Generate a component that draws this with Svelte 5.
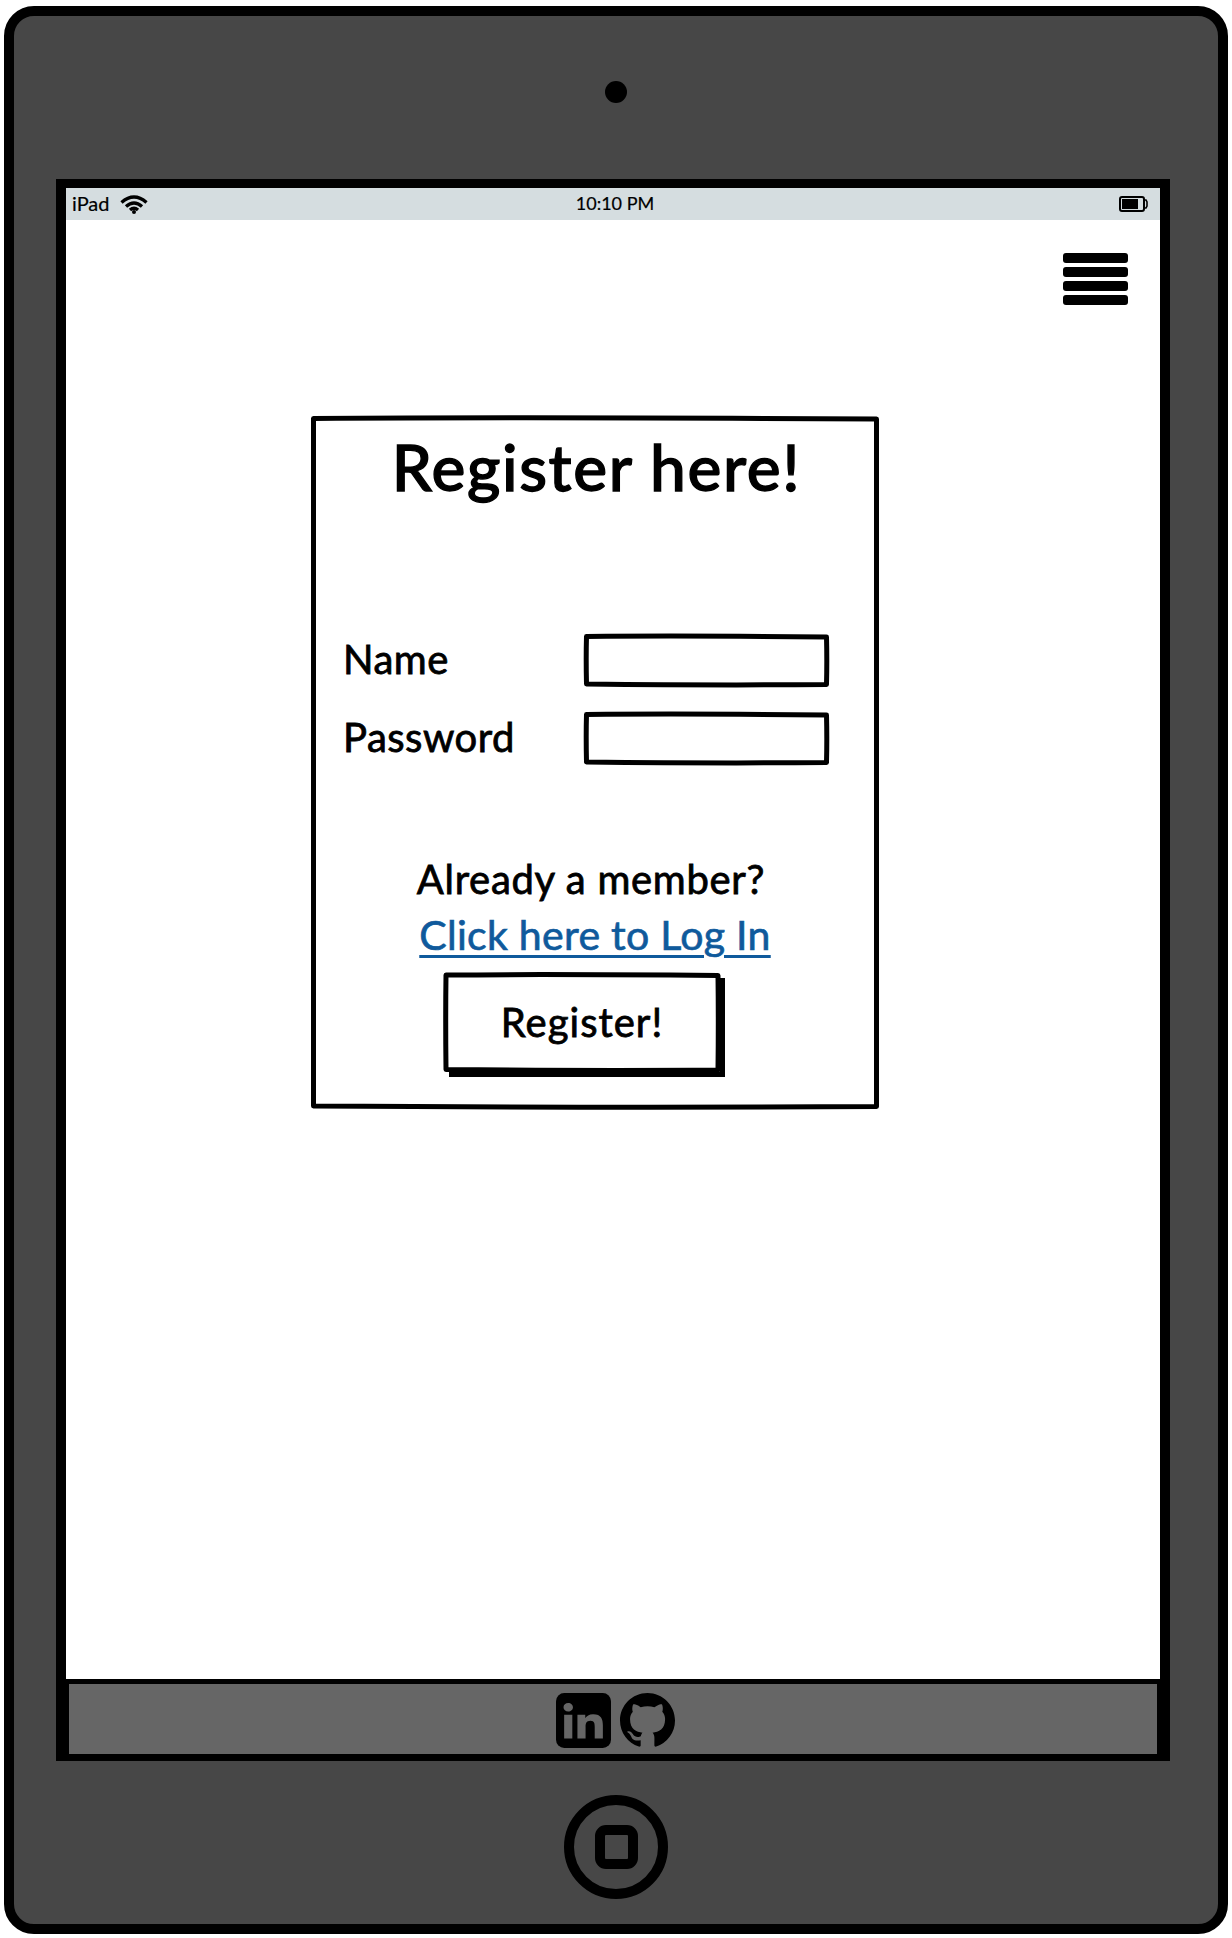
<script lang="ts">
	const github =
		'M8 0C3.58 0 0 3.58 0 8c0 3.54 2.29 6.53 5.47 7.59.4.07.55-.17.55-.38 0-.19-.01-.82-.01-1.49-2.01.37-2.53-.49-2.69-.94-.09-.23-.48-.94-.82-1.13-.28-.15-.68-.52-.01-.53.63-.01 1.08.58 1.23.82.72 1.21 1.87.87 2.33.66.07-.52.28-.87.51-1.07-1.78-.2-3.64-.89-3.64-3.95 0-.87.31-1.59.82-2.15-.08-.2-.36-1.02.08-2.12 0 0 .67-.21 2.2.82.64-.18 1.32-.27 2-.27.68 0 1.36.09 2 .27 1.53-1.04 2.2-.82 2.2-.82.44 1.1.16 1.92.08 2.12.51.56.82 1.27.82 2.15 0 3.07-1.87 3.75-3.65 3.95.29.25.54.73.54 1.48 0 1.07-.01 1.93-.01 2.2 0 .21.15.46.55.38A8.013 8.013 0 0016 8c0-4.42-3.58-8-8-8z';
	const linkedinLetters =
		'M20.447 20.452h-3.554v-5.569c0-1.328-.027-3.037-1.852-3.037-1.853 0-2.136 1.445-2.136 2.939v5.667H9.351V9h3.414v1.561h.046c.477-.9 1.637-1.85 3.37-1.85 3.601 0 4.267 2.37 4.267 5.455v6.286zM5.337 7.433c-1.144 0-2.063-.926-2.063-2.065 0-1.138.92-2.063 2.063-2.063 1.14 0 2.064.925 2.064 2.063 0 1.139-.925 2.065-2.064 2.065zm1.782 13.019H3.555V9h3.564v11.452z';
	let fields = ['Name', 'Password'];

	// hand-drawn looking outline, edges bow a little
	function sketch(w: number, h: number, i: number, bow = 1.5) {
		return [
			`M${i} ${i}`,
			`Q${w * 0.4} ${i - bow} ${w - i} ${i + 0.5}`,
			`Q${w - i + bow * 0.6} ${h * 0.5} ${w - i} ${h - i}`,
			`Q${w * 0.55} ${h - i + bow} ${i} ${h - i - 0.5}`,
			`Q${i - bow * 0.6} ${h * 0.45} ${i} ${i}Z`
		].join(' ');
	}
</script>

<div class="device">
	<div class="camera-row"><span class="camera"></span></div>
	<div class="frame">
		<div class="status">
			<div class="status-left">
				<span>iPad</span>
				<svg class="wifi" viewBox="0 0 28 19" width="28" height="19">
					<path d="M1.5 7.5 Q14 -3.5 26.5 7.5" />
					<path d="M6 11.5 Q14 4.5 22 11.5" />
					<path d="M10 15 Q14 11.5 18 15" />
					<circle cx="14" cy="17" r="2" />
				</svg>
			</div>
			<span class="time">10:10 PM</span>
			<svg class="battery" viewBox="0 0 29 16" width="29" height="16">
				<rect x="1" y="1" width="24" height="14" rx="2" fill="none" stroke="#000" stroke-width="2" />
				<rect x="3" y="3" width="16" height="10" fill="#000" />
				<path d="M25 4h2l1 2v4l-1 2h-2" fill="none" stroke="#000" stroke-width="1.6" />
			</svg>
		</div>
		<div class="screen">
			<div class="menu-row">
				<div class="menu">
					<span></span><span></span><span></span><span></span>
				</div>
			</div>
			<div class="card">
				<svg class="sketch" viewBox="0 0 568 693"><path d={sketch(568, 693, 2.5)} stroke-width="5" /></svg>
				<h1>Register here!</h1>
				<div class="fields">
					{#each fields as field}
						<div class="field">
							<span class="label">{field}</span>
							<span class="input">
								<svg class="sketch" viewBox="0 0 245 53"><path d={sketch(245, 53, 2.5, 1)} stroke-width="5" /></svg>
							</span>
						</div>
					{/each}
				</div>
				<p class="member">Already a member?</p>
				<a class="login" href="#login">Click here to Log In</a>
				<div class="button-row">
					<button type="button">
						<svg class="sketch" viewBox="0 0 276 99"><path d={sketch(276, 99, 2, 1)} stroke-width="5" /></svg>
						Register!
					</button>
				</div>
			</div>
		</div>
		<div class="footer">
			<svg viewBox="0 0 24 24" width="55" height="55">
				<rect width="24" height="24" rx="3.6" fill="#000" />
				<path d={linkedinLetters} fill="#666" transform="translate(0 1.4) scale(1 .9)" />
			</svg>
			<svg viewBox="0 0 16 16" width="55" height="55">
				<path d={github} fill="#000" />
			</svg>
		</div>
	</div>
	<div class="home-row">
		<div class="home"><span></span></div>
	</div>
</div>

<style>
	:global(body) {
		background: #fff;
		font-family: Lato, 'Liberation Sans', sans-serif;
		color: #000;
	}

	.device {
		box-sizing: border-box;
		width: 1224px;
		height: 1928px;
		margin: 6px 0 0 4px;
		padding: 0 48px 0 42px;
		background: #474747;
		border: 10px solid #000;
		border-radius: 30px;
		display: flex;
		flex-direction: column;
	}

	.camera-row {
		height: 163px;
		display: flex;
		justify-content: center;
		padding: 65px 0 0 6px;
		box-sizing: border-box;
	}

	.camera {
		width: 22px;
		height: 22px;
		border-radius: 50%;
		background: #000;
	}

	.frame {
		box-sizing: border-box;
		height: 1582px;
		border: 10px solid #000;
		border-top-width: 9px;
		border-bottom-width: 7px;
		display: flex;
		flex-direction: column;
		background: #fff;
	}

	.status {
		height: 32px;
		flex: none;
		background: #d5dde0;
		display: grid;
		grid-template-columns: 1fr auto 1fr;
		align-items: center;
		padding: 0 12px 3px 6px;
		box-sizing: border-box;
		font-size: 20px;
		-webkit-text-stroke: 0.2px #000;
	}

	.status-left {
		display: flex;
		align-items: center;
		gap: 11px;
	}

	.wifi {
		fill: #000;
		margin-top: 3px;
	}

	.wifi path {
		fill: none;
		stroke: #000;
		stroke-width: 3.4;
	}

	.time {
		font-size: 18px;
		padding-left: 10px;
	}

	.battery {
		justify-self: end;
		margin-top: 3px;
	}

	.screen {
		flex: 1;
		background: #fff;
		display: flex;
		flex-direction: column;
	}

	.menu-row {
		display: flex;
		justify-content: flex-end;
		padding: 33px 32px 0 0;
		height: 196px;
		box-sizing: border-box;
	}

	.menu {
		width: 65px;
		display: flex;
		flex-direction: column;
		gap: 4px;
	}

	.menu span {
		height: 10px;
		background: #000;
		border-radius: 3px;
	}

	.card {
		box-sizing: border-box;
		position: relative;
		width: 568px;
		height: 693px;
		margin-left: 245px;
		padding: 4px;
		display: flex;
		flex-direction: column;
	}

	.sketch {
		position: absolute;
		left: 0;
		top: 0;
		width: 100%;
		height: 100%;
		overflow: visible;
		pointer-events: none;
	}

	.sketch path {
		fill: none;
		stroke: #000;
		stroke-linejoin: round;
	}

	h1 {
		margin: 0;
		text-align: center;
		font-size: 64px;
		line-height: 78px;
		font-weight: 500;
		letter-spacing: 1.6px;
		-webkit-text-stroke: 1.3px #000;
		padding: 8px 0 0 3px;
	}

	.fields {
		display: flex;
		flex-direction: column;
		gap: 25px;
		margin-top: 128px;
		padding: 0 46px 0 28px;
	}

	.field {
		display: flex;
		justify-content: space-between;
		align-items: center;
	}

	.label {
		font-size: 40px;
		letter-spacing: 0.5px;
		-webkit-text-stroke: 0.8px #000;
		margin-top: -3px;
	}

	.input {
		position: relative;
		width: 245px;
		height: 53px;
	}

	.member {
		margin: 90px 0 0;
		text-align: center;
		font-size: 40px;
		line-height: 48px;
		padding-right: 8px;
		letter-spacing: 0.7px;
		-webkit-text-stroke: 0.8px #000;
	}

	.login {
		margin-top: 8px;
		text-align: center;
		font-size: 41px;
		line-height: 48px;
		color: #0f5a9c;
		letter-spacing: 0.3px;
		-webkit-text-stroke: 0.7px #0f5a9c;
		text-decoration-thickness: 3px;
		text-underline-offset: 5px;
	}

	.button-row {
		margin-top: 14px;
		padding-left: 129px;
	}

	button {
		box-sizing: border-box;
		position: relative;
		width: 276px;
		height: 99px;
		background: #fff;
		border: 0;
		box-shadow: 5px 5px 0 #000;
		font: inherit;
		font-size: 40px;
		letter-spacing: 1px;
		-webkit-text-stroke: 0.8px #000;
		color: #000;
		padding: 0 0 2px;
	}

	.footer {
		flex: none;
		height: 75px;
		box-sizing: border-box;
		background: #666;
		border: solid #000;
		border-width: 5px 3px 0 3px;
		display: flex;
		justify-content: center;
		gap: 9px;
		padding: 9px 0 0 5px;
	}

	.home-row {
		flex: 1;
		display: flex;
		justify-content: center;
		padding: 34px 0 0 6px;
	}

	.home {
		box-sizing: border-box;
		width: 104px;
		height: 104px;
		border: 10px solid #000;
		border-radius: 50%;
		display: flex;
		align-items: center;
		justify-content: center;
	}

	.home span {
		box-sizing: border-box;
		width: 43px;
		height: 44px;
		border: 10px solid #000;
		border-radius: 11px;
	}
</style>
